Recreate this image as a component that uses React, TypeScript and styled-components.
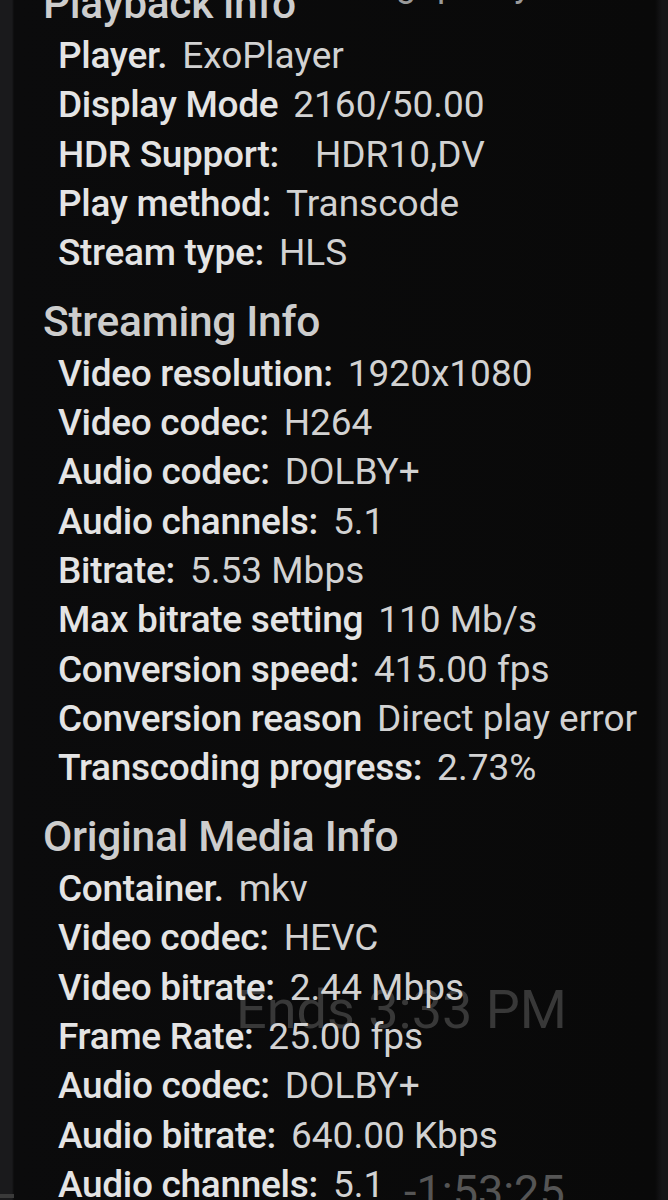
import React from 'react';
import styled, { createGlobalStyle } from 'styled-components';

type Row = { label: string; value: string; wide?: boolean };
type Section = { title: string; rows: Row[] };

const sections: Section[] = [
    {
        title: 'Playback info',
        rows: [
            { label: 'Player.', value: 'ExoPlayer' },
            { label: 'Display Mode', value: '2160/50.00' },
            { label: 'HDR Support:', value: 'HDR10,DV', wide: true },
            { label: 'Play method:', value: 'Transcode' },
            { label: 'Stream type:', value: 'HLS' },
        ],
    },
    {
        title: 'Streaming Info',
        rows: [
            { label: 'Video resolution:', value: '1920x1080' },
            { label: 'Video codec:', value: 'H264' },
            { label: 'Audio codec:', value: 'DOLBY+' },
            { label: 'Audio channels:', value: '5.1' },
            { label: 'Bitrate:', value: '5.53 Mbps' },
            { label: 'Max bitrate setting', value: '110 Mb/s' },
            { label: 'Conversion speed:', value: '415.00 fps' },
            { label: 'Conversion reason', value: 'Direct play error' },
            { label: 'Transcoding progress:', value: '2.73%' },
        ],
    },
    {
        title: 'Original Media Info',
        rows: [
            { label: 'Container.', value: 'mkv' },
            { label: 'Video codec:', value: 'HEVC' },
            { label: 'Video bitrate:', value: '2.44 Mbps' },
            { label: 'Frame Rate:', value: '25.00 fps' },
            { label: 'Audio codec:', value: 'DOLBY+' },
            { label: 'Audio bitrate:', value: '640.00 Kbps' },
            { label: 'Audio channels:', value: '5.1' },
        ],
    },
];

export default function App() {
    return (
        <>
            <GlobalStyle />
            <Screen>
                {/* player chrome showing through behind the stats panel */}
                <TopHint>Streaming quality</TopHint>
                <EndsAt>Ends 3:33 PM</EndsAt>
                <Remaining>-1:53:25</Remaining>
                <ProgressStub />
                <Panel>
                    {sections.map((section) => (
                        <Block key={section.title}>
                            <Heading>{section.title}</Heading>
                            {section.rows.map((row) => (
                                <InfoRow key={row.label}>
                                    <Label>{row.label}</Label>
                                    <Value $wide={row.wide}>{row.value}</Value>
                                </InfoRow>
                            ))}
                        </Block>
                    ))}
                </Panel>
            </Screen>
        </>
    );
}

const GlobalStyle = createGlobalStyle`
    html, body {
        margin: 0;
        padding: 0;
        background: #0a0a0b;
    }
    body {
        font-family: Roboto, "Noto Sans", "Liberation Sans", sans-serif;
    }
`;

const Screen = styled.div`
    position: relative;
    width: 668px;
    height: 1200px;
    overflow: hidden;
    background: linear-gradient(90deg, #1a1a1c 0, #1a1a1c 12px, #0b0b0c 14px, #090909 655px, #161618 662px, #161618 668px);
`;

const Panel = styled.div`
    position: relative;
    z-index: 1;
    padding: 0 0 0 43px;
`;

const Block = styled.section`
    &:first-child h2 {
        margin-top: -23px;
    }
`;

const Heading = styled.h2`
    margin: 17px 0 0;
    height: 54px;
    line-height: 54px;
    font-size: 42.5px;
    font-weight: 500;
    color: #cdcdcd;
    letter-spacing: -0.3px;
`;

const InfoRow = styled.div`
    display: flex;
    align-items: baseline;
    gap: 15px;
    height: 49.35px;
    line-height: 49.35px;
    padding-left: 15px;
    white-space: nowrap;
`;

const Label = styled.span`
    font-size: 37px;
    font-weight: 500;
    color: #e4e4e4;
    letter-spacing: -0.3px;
`;

const Value = styled.span<{ $wide?: boolean }>`
    font-size: 37px;
    font-weight: 400;
    color: #d2d2d2;
    margin-left: ${(p) => (p.$wide ? '21px' : '0')};
`;

const TopHint = styled.div`
    position: absolute;
    top: -36px;
    left: 252px;
    font-size: 36px;
    line-height: 40px;
    color: #9a9a9a;
    white-space: nowrap;
`;

const EndsAt = styled.div`
    position: absolute;
    top: 980px;
    left: 236px;
    font-size: 54px;
    line-height: 60px;
    color: #383838;
    white-space: nowrap;
`;

const Remaining = styled.div`
    position: absolute;
    top: 1164px;
    left: 404px;
    font-size: 45px;
    line-height: 56px;
    color: #555;
    white-space: nowrap;
`;

const ProgressStub = styled.div`
    position: absolute;
    left: 0;
    bottom: 2px;
    width: 14px;
    height: 4px;
    background: #3a3a3a;
`;
